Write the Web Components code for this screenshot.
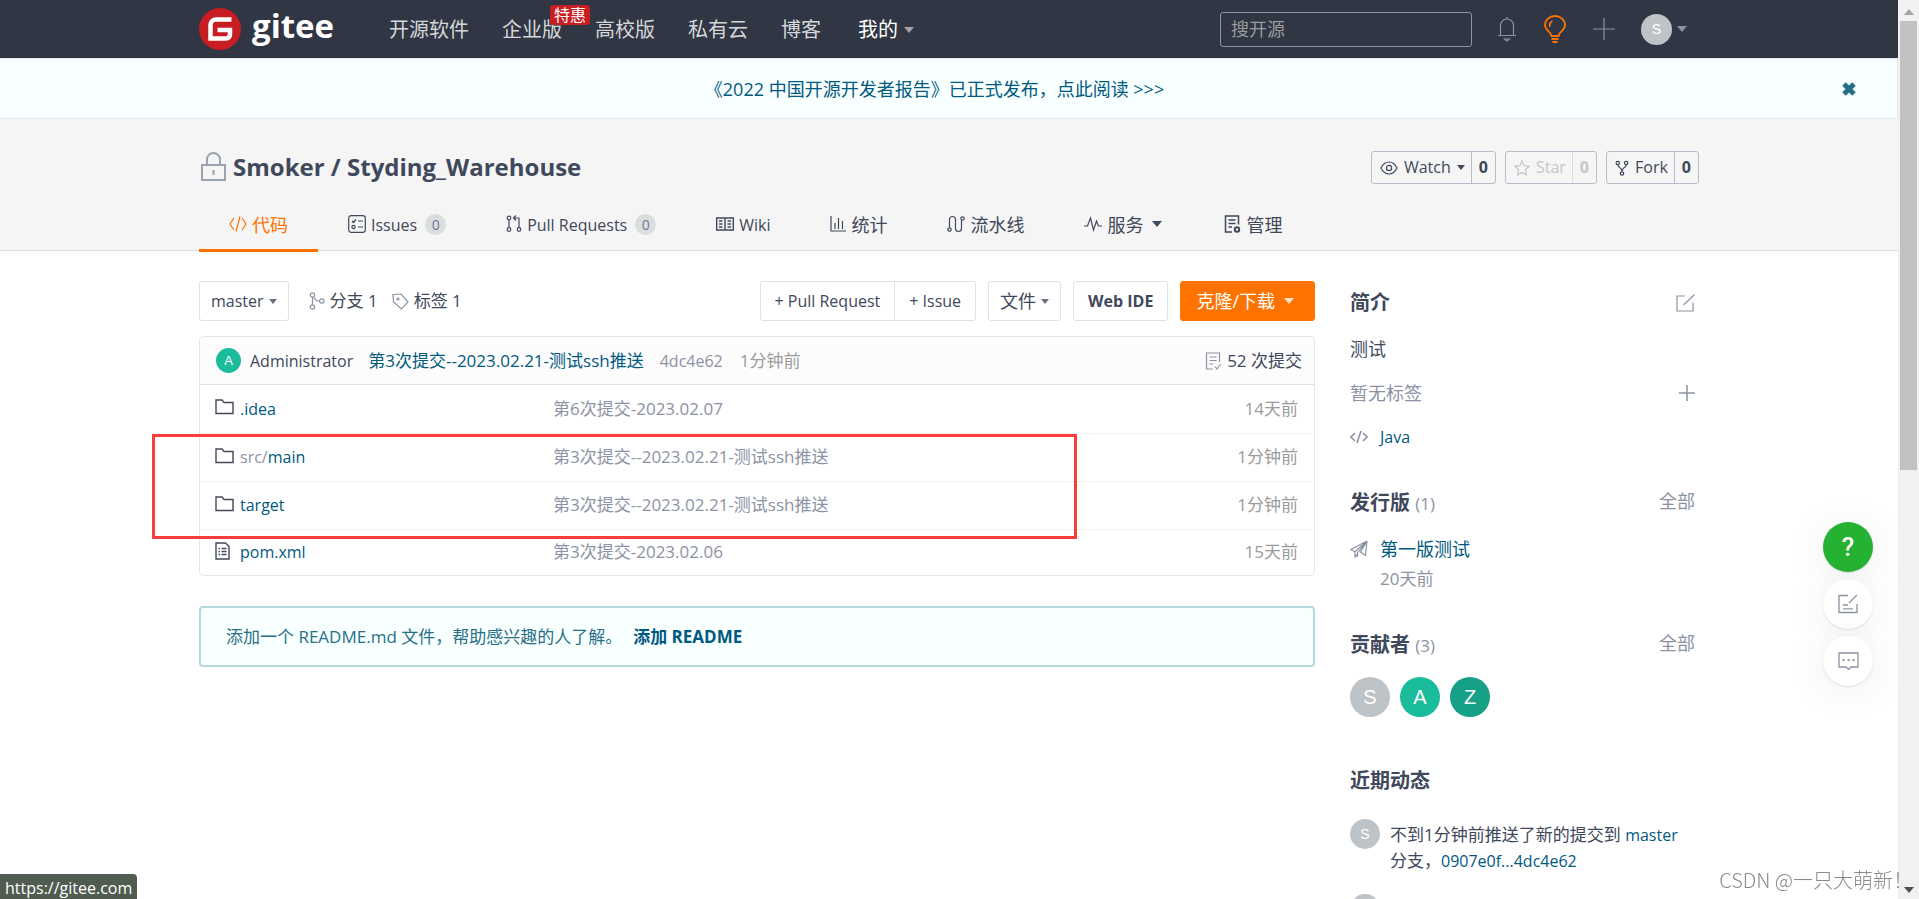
<!DOCTYPE html>
<html lang="zh-CN">
<head>
<meta charset="utf-8">
<title>Smoker / Styding_Warehouse</title>
<style>
  html { overflow: hidden; }
  body {
    margin: 0; padding-right: 21px; height: 100vh; box-sizing: border-box; overflow: hidden; background: #fff; color: #40485b;
    font: 17px/24px "Open Sans", "Noto Sans CJK SC", sans-serif;
    --ink: #40485b; --muted: #8c92a4; --link: #005980; --orange: #fe7300; --line: #dce3e8;
  }
</style>
</head>
<body>
<gt-topbar></gt-topbar>
<gt-notice>《2022 中国开源开发者报告》已正式发布，点此阅读 &gt;&gt;&gt;</gt-notice>
<gt-repo-header></gt-repo-header>
<gt-page>
  <gt-toolbar></gt-toolbar>
  <gt-files></gt-files>
  <gt-readme-hint></gt-readme-hint>
  <gt-sidebar slot="side"></gt-sidebar>
</gt-page>
<gt-float-tools></gt-float-tools>
<gt-scroll-rail></gt-scroll-rail>
<gt-status-link>https://gitee.com</gt-status-link>
<gt-watermark>CSDN @一只大萌新！</gt-watermark>

<script>
const BASE = `
  :host, *, *::before { box-sizing: border-box; }
  a { color: inherit; text-decoration: none; }
  button { font: inherit; color: inherit; background: none; border: 0; padding: 0; margin: 0; cursor: pointer; white-space: nowrap; }
  h1, h2, p { margin: 0; }
  ul { list-style: none; margin: 0; padding: 0; }
`;
function define(name, css, html) {
  const tpl = document.createElement('template');
  customElements.define(name, class extends HTMLElement {
    constructor() {
      super();
      tpl.innerHTML = `<style>${BASE}${css}</style>${typeof html === 'function' ? html(this) : html}`;
      this.attachShadow({ mode: 'open' }).append(tpl.content.cloneNode(true));
    }
  });
}

const ICONS = {
  bell: [20, 26, '<path d="M1 19.500h18M3.500 19V9.500a6.500 6.500 0 0 1 13 0V19M10 3V1M7.500 23h5l-2.500 2z"/>'],
  bulb: [24, 28, '<path stroke-width="1.800" d="M8.500 21c0-4.500-6.500-5-6.500-11a10 9 0 0 1 20 0c0 6-6.500 6.500-6.500 11zM7 12c-1-2 0-5 2.500-6M8.500 24h7M9.500 27h5"/>'],
  plus: [22, 22, '<path d="M11 0v22M0 11h22"/>'],
  cross: [14, 14, '<path stroke-width="5" d="M2 2l10 10M12 2L2 12"/>'],
  lock: [25, 29, '<path stroke-width="2" d="M1 13h23v15H1zM6 13V7.500a6.500 6.500 0 0 1 13 0V13M12.500 18v5"/>'],
  code: [18, 18, '<path d="M5 3L1 9l4 6M13 3l4 6-4 6M11 1.500L7 16.500"/>'],
  codeSmall: [18, 14, '<path stroke-width="1.600" d="M5 3L1 7l4 4M13 3l4 4-4 4M11 1L7 13"/>'],
  issues: [18, 18, '<rect x=".7" y=".7" width="16.600" height="16.600" rx="2.500"/><path d="M4 6l1.500 1.500L8 4.500M10 6h5M10 12h5"/><circle cx="5.500" cy="12" r="1.600"/>'],
  pull: [16, 18, '<circle cx="3" cy="3" r="1.800"/><circle cx="3" cy="14.500" r="1.800"/><circle cx="13" cy="14.500" r="1.800"/><path d="M3 5v7.500M13 12.500V3H7.500M10 .5L7.500 3 10 5.500"/>'],
  book: [18, 14, '<path stroke-width="1.400" d="M.7 1h16.600v12H.7zM9 1v12M3 4h3.500M3 7h3.500M3 10h3.500M11.500 4H15M11.500 7H15M11.500 10H15"/>'],
  chart: [16, 16, '<path d="M1 0v15h15M5 13V7M8.500 13V2M12.500 13V5"/>'],
  flow: [18, 18, '<circle cx="2.500" cy="14.500" r="1.700"/><circle cx="15.500" cy="3.500" r="1.700"/><path d="M2.500 12.500V4.500a3 3 0 0 1 6 0v9a3 3 0 0 0 6 0V5.500"/>'],
  pulse: [18, 16, '<path d="M0 10h3.500L6.500 2l3 12 3-9 2 5H18"/>'],
  manage: [17, 18, '<path stroke-width="1.500" d="M8 17H1.500V1h13v8.500M4.500 5h7M4.500 8.500h7M4.500 12h3.500"/><circle cx="13" cy="14.500" r="2.200" stroke-width="2"/>'],
  eye: [18, 14, '<path d="M1 7c4-8 12-8 16 0-4 8-12 8-16 0z"/><circle cx="9" cy="7" r="2.600"/>'],
  star: [16, 16, '<path d="M8 1l2.100 4.700 5 .6-3.700 3.500 1 5.100L8 12.400 3.600 14.900l1-5.100L.9 6.300l5-.6z"/>'],
  fork: [14, 16, '<circle cx="2.800" cy="3" r="1.700"/><circle cx="11.200" cy="3" r="1.700"/><circle cx="7" cy="13.500" r="1.700"/><path d="M2.800 4.700C2.800 8 7 7 7 11.500M11.200 4.700C11.200 8 7 7 7 11.500"/>'],
  branch: [16, 18, '<circle cx="3.500" cy="3" r="2.200"/><circle cx="3.500" cy="15" r="2.200"/><circle cx="12.800" cy="9" r="2.200"/><path d="M3.500 5.200v7.600M4.800 5C6 8 8 9 10.500 9"/>'],
  tag: [17, 17, '<path d="M1 1.500l8-.5 7 8-6.500 7L1.500 9z"/><circle cx="6" cy="6" r="1"/>'],
  commits: [16, 18, '<path d="M8 17H1.500V1h13v9M4.500 5h7M4.500 8.500h7M4.500 12h3.500M10 14.500l2 2.500 3.500-5"/>'],
  folder: [19, 16, '<path stroke-width="1.400" d="M1 14.500V1h6l2 2.500h9v11z"/>'],
  file: [15, 18, '<path stroke-width="1.400" d="M1 17V1h9.500L14 4.500V17zM3.500 6.500h1.500M6.500 6.500h5M3.500 9.500h1.500M6.500 9.500h5M3.500 12.500h1.500M6.500 12.500h5"/>'],
  edit: [19, 18, '<path d="M9 2H1v15h16V8.500M7.500 11L18.500.5"/>'],
  add: [16, 16, '<path stroke-width="1.500" d="M8 0v16M0 8h16"/>'],
  plane: [18, 18, '<path d="M17 1L.8 9.500l4.200 2.300zM17 1l-1.500 14.500-5-3.500zM5 11.800V17l3-3.500M5 11.800L17 1 7.500 13v4"/>'],
  note: [20, 20, '<path stroke-width="1.300" d="M10 1.500H1v17h18V10M11 9l8-8M5 11h5M5 14.800h10"/>'],
  chat: [21, 18, '<path stroke-width="1.300" d="M1 1h19v14h-7l-2.500 2.500L8 15H1z"/><path stroke-width="2.200" stroke-linecap="round" d="M5.500 8.200h.1M10.500 8.200h.1M15.500 8.200h.1"/>'],
  caret: [10, 6, '<path stroke="none" fill="currentColor" d="M0 0h10L5 6z"/>'],
  caretSmall: [8, 5, '<path stroke="none" fill="currentColor" d="M0 0h8L4 5z"/>'],
};
customElements.define('gt-icon', class extends HTMLElement {
  connectedCallback() {
    if (this.shadowRoot) return;
    const [w, h, body] = ICONS[this.getAttribute('name')];
    this.attachShadow({ mode: 'open' }).innerHTML =
      `<style>:host{display:inline-flex;flex:none}</style>
       <svg aria-hidden="true" width="${w}" height="${h}" viewBox="0 0 ${w} ${h}" fill="none" stroke="currentColor" stroke-width="1.2">${body}</svg>`;
  }
});

define('gt-avatar', `
  :host { display: inline-flex; flex: none; align-items: center; justify-content: center;
    width: var(--size, 30px); height: var(--size, 30px); border-radius: 50%;
    background: var(--tone, #bdc3c7); color: #fff;
    font-family: "Liberation Sans", sans-serif; font-size: var(--letter, 14px); line-height: 1; }
`, '<slot></slot>');

define('gt-topbar', `
  :host { display: block; background: #303643; color: #d6d7da; }
  .in { max-width: 1500px; margin: 0 auto; height: 58px; display: flex; align-items: center; }
  .logo { display: flex; align-items: center; gap: 11px; width: 190px; color: #fff; font-size: 33px; font-weight: 700; line-height: 42px; }
  .logo span { padding-bottom: 6px; }
  nav { display: flex; gap: 33px; font-size: 20px; line-height: 30px; flex: 1; padding-top: 2px; }
  nav a { position: relative; white-space: nowrap; }
  nav .mine { color: #fff; display: flex; align-items: center; gap: 6px; margin-left: 4px; }
  nav .mine gt-icon { color: #a0a3ab; }
  .hot { position: absolute; left: 48px; top: -10px; z-index: 1; padding: 0 4px; border-radius: 3px; background: #c71d23; color: #fff; font-size: 16px; line-height: 20px; }
  input { width: 252px; height: 35px; padding: 0 10px; border: 1px solid #8c92a4; border-radius: 3px; background: transparent; color: #fff; font: inherit; font-size: 18px; }
  input::placeholder { color: #9a9b9f; opacity: 1; }
  .tools { display: flex; align-items: center; gap: 26px; margin-left: 25px; width: 202px; color: #8c92a4; }
  .tools button, .tools a { display: flex; align-items: center; gap: 5px; }
  .bulb { color: var(--orange); }
`, `
  <div class="in">
    <a class="logo" href="#" aria-label="gitee">
      <svg width="42" height="42" viewBox="0 0 42 42" aria-hidden="true"><circle cx="21" cy="21" r="21" fill="#c71d23"/><path d="M32.500 11.500H17a5.500 5.500 0 0 0-5.500 5.500v13.500H27a4 4 0 0 0 4-4v-4.500H18.500" fill="none" stroke="#fff" stroke-width="4.500"/></svg>
      <span>gitee</span>
    </a>
    <nav>
      <a href="#">开源软件</a><a href="#">企业版<span class="hot">特惠</span></a><a href="#">高校版</a><a href="#">私有云</a><a href="#">博客</a>
      <a href="#" class="mine">我的 <gt-icon name="caret"></gt-icon></a>
    </nav>
    <input type="search" placeholder="搜开源" aria-label="搜开源">
    <div class="tools">
      <button aria-label="通知"><gt-icon name="bell"></gt-icon></button>
      <button class="bulb" aria-label="提示"><gt-icon name="bulb"></gt-icon></button>
      <button aria-label="新建"><gt-icon name="plus"></gt-icon></button>
      <a href="#"><gt-avatar style="--size:31px">S</gt-avatar><gt-icon name="caret"></gt-icon></a>
    </div>
  </div>
`);

define('gt-notice', `
  :host { display: flex; align-items: center; height: 61px; padding: 0 41px 0 0; border: 1px solid #e3e9ed; border-left: 0; background: #f8ffff; color: var(--link); }
  a { flex: 1; text-align: center; font-size: 18px; padding-left: 27px; }
  button { display: flex; color: #276f86; }
`, `<a href="#"><slot></slot></a><button aria-label="关闭"><gt-icon name="cross"></gt-icon></button>`);

define('gt-counter-button', `
  :host { display: inline-flex; }
  button { display: flex; align-items: stretch; height: 33px; border: 1px solid #b9bbc9; border-radius: 3px; line-height: 31px; }
  .main { display: flex; align-items: center; gap: 6px; padding: 0 6px 0 8px; }
  .count { border-left: 1px solid #b9bbc9; padding: 0 7px; font-weight: 700; min-width: 24px; }
  button:disabled { color: #c6c6c6; }
  button:disabled .count { border-color: #dcdde3; }
`, el => `<button ${el.hasAttribute('off') ? 'disabled' : ''}><span class="main"><slot></slot></span><span class="count">0</span></button>`);

define('gt-repo-header', `
  :host { display: block; background: #f5f5f5; border-bottom: 1px solid #dcdddf; padding-top: 32px; }
  .in { max-width: 1500px; margin: 0 auto; }
  .title { display: flex; align-items: center; gap: 9px; height: 33px; font-size: 16px; }
  h1 { flex: 1; display: flex; align-items: center; gap: 7px; padding-left: 2px; font-size: 24px; line-height: 32px; margin-bottom: 2px; }
  h1 gt-icon { color: #9aa3ae; }
  nav { display: flex; height: 54px; margin: 14px 0 -2px; }
  nav a { display: flex; align-items: center; gap: 5px; padding: 2px 30px 0; border-bottom: 3px solid transparent; font-size: 18px; white-space: nowrap; }
  nav a.en { font-size: 16px; }
  nav a.on { color: var(--orange); border-color: var(--orange); }
  nav gt-icon { margin-bottom: 2px; }
  .n { min-width: 21px; height: 21px; margin-left: 3px; border-radius: 11px; background: #dcdddf; color: #6e7b9b; font-size: 14px; line-height: 21px; text-align: center; }
  .caret { padding: 0 2px 0 4px; }
`, `
  <div class="in">
    <div class="title">
      <h1><gt-icon name="lock"></gt-icon><a href="#">Smoker / Styding_Warehouse</a></h1>
      <gt-counter-button><gt-icon name="eye"></gt-icon>Watch<gt-icon name="caretSmall"></gt-icon></gt-counter-button>
      <gt-counter-button off><gt-icon name="star"></gt-icon>Star</gt-counter-button>
      <gt-counter-button><gt-icon name="fork"></gt-icon>Fork</gt-counter-button>
    </div>
    <nav>
      <a href="#" class="on"><gt-icon name="code"></gt-icon>代码</a>
      <a href="#" class="en"><gt-icon name="issues"></gt-icon>Issues<span class="n">0</span></a>
      <a href="#" class="en"><gt-icon name="pull"></gt-icon>Pull Requests<span class="n">0</span></a>
      <a href="#" class="en"><gt-icon name="book"></gt-icon>Wiki</a>
      <a href="#"><gt-icon name="chart"></gt-icon>统计</a>
      <a href="#"><gt-icon name="flow"></gt-icon>流水线</a>
      <a href="#"><gt-icon name="pulse"></gt-icon>服务<gt-icon class="caret" name="caret"></gt-icon></a>
      <a href="#"><gt-icon name="manage"></gt-icon>管理</a>
    </nav>
  </div>
`);

define('gt-page', `
  :host { display: grid; grid-template-columns: minmax(0, 1fr) 349px; column-gap: 35px; max-width: 1500px; margin: 0 auto; padding-top: 30px; }
  main { display: flex; flex-direction: column; }
`, `<main><slot></slot></main><slot name="side"></slot>`);

define('gt-toolbar', `
  :host { display: flex; align-items: center; gap: 12px; margin-bottom: 15px; }
  .btn { display: flex; align-items: center; gap: 5px; height: 40px; padding: 0 11px; border: 1px solid var(--line); border-radius: 3px; font-size: 16px; }
  .btn gt-icon { color: #6a7080; }
  .refs { display: flex; gap: 14px; flex: 1; padding-left: 8px; }
  .refs a { display: flex; align-items: center; gap: 5px; }
  .refs gt-icon { color: #8c92a4; }
  .group { display: flex; }
  .group .btn { padding: 0 14px; }
  .group .btn:first-child { border-radius: 3px 0 0 3px; }
  .group .btn:last-child { border-radius: 0 3px 3px 0; margin-left: -1px; }
  .cn { font-size: 18px; }
  .bold { font-weight: 700; padding: 0 14px; }
  .primary { background: var(--orange); border-color: var(--orange); color: #fff; font-size: 18px; gap: 9px; padding: 0 20px 0 15px; }
  .primary gt-icon { color: #ffe0c4; }
`, `
  <button class="btn">master<gt-icon name="caretSmall"></gt-icon></button>
  <div class="refs">
    <a href="#"><gt-icon name="branch"></gt-icon>分支 1</a>
    <a href="#"><gt-icon name="tag"></gt-icon>标签 1</a>
  </div>
  <div class="group"><button class="btn">+ Pull Request</button><button class="btn">+ Issue</button></div>
  <button class="btn cn">文件<gt-icon name="caretSmall"></gt-icon></button>
  <button class="btn bold">Web IDE</button>
  <button class="btn primary">克隆/下载<gt-icon name="caret"></gt-icon></button>
`);

const FILES = [
  ['folder', '', '.idea', '第6次提交-2023.02.07', '14天前'],
  ['folder', 'src/', 'main', '第3次提交--2023.02.21-测试ssh推送', '1分钟前'],
  ['folder', '', 'target', '第3次提交--2023.02.21-测试ssh推送', '1分钟前'],
  ['file', '', 'pom.xml', '第3次提交-2023.02.06', '15天前'],
];
define('gt-files', `
  :host { display: block; position: relative; border: 1px solid #e1e6ea; border-radius: 4px; }
  .last { display: flex; align-items: center; height: 48px; padding: 0 12px 0 16px; background: #fcfcfc; border-bottom: 1px solid var(--line); border-radius: 4px 4px 0 0; }
  .who { font-size: 16px; margin: 0 15px 0 9px; }
  .msg { color: var(--link); margin-right: 16px; }
  .hash { color: var(--muted); font-size: 16px; margin-right: 17px; }
  .when { color: #9b9b9b; flex: 1; }
  .total { display: flex; align-items: center; gap: 6px; }
  .total gt-icon { color: var(--muted); }
  table { width: 100%; border-collapse: collapse; table-layout: fixed; }
  td { height: 48px; padding: 0 16px 0 0; border-bottom: 1px solid #eef1f4; color: var(--muted); }
  tr:last-child td { border-bottom: 0; height: 46px; }
  td:first-child { width: 353px; padding-left: 15px; }
  td:last-child { width: 200px; text-align: right; color: #9b9b9b; }
  .name { display: flex; align-items: center; gap: 6px; font-size: 16px; color: var(--ink); }
  .ico { width: 19px; display: flex; padding-bottom: 3px; }
  .name a { color: var(--link); }
  .name i { font-style: normal; color: var(--muted); }
  .mark { position: absolute; left: -48px; right: 237px; top: 97px; height: 105px; border: 3px solid #fb3d3c; pointer-events: none; }
`, () => `
  <div class="last">
    <gt-avatar style="--size:25px;--tone:#1abc9c;--letter:13px">A</gt-avatar>
    <a class="who" href="#">Administrator</a><a class="msg" href="#">第3次提交--2023.02.21-测试ssh推送</a>
    <a class="hash" href="#">4dc4e62</a><span class="when">1分钟前</span>
    <a class="total" href="#"><gt-icon name="commits"></gt-icon>52 次提交</a>
  </div>
  <table><tbody>${FILES.map(([icon, dir, name, msg, time]) => `
    <tr><td><span class="name"><span class="ico"><gt-icon name="${icon}"></gt-icon></span><a href="#"><i>${dir}</i>${name}</a></span></td>
    <td>${msg}</td><td>${time}</td></tr>`).join('')}</tbody></table>
  <div class="mark"></div>
`);

define('gt-readme-hint', `
  :host { display: flex; align-items: center; gap: 11px; min-height: 61px; margin-top: 30px; padding: 0 25px; border: 2px solid #b3d9df; border-radius: 4px; background: #f8ffff; color: #276f86; }
  a { color: var(--link); font-weight: 700; }
`, `<span>添加一个 README.md 文件，帮助感兴趣的人了解。</span><a href="#">添加 README</a>`);

define('gt-side-section', `
  :host { display: block; margin-bottom: 42px; }
  header { display: flex; align-items: center; justify-content: space-between; height: 24px; margin-bottom: var(--head-gap, 22px); padding-right: 4px; color: var(--muted); font-size: 18px; }
  h2 { color: var(--ink); font-size: 20px; line-height: 24px; }
  small { font-size: 17px; font-weight: 400; color: var(--muted); }
  ::slotted([slot=action]) { padding-bottom: 4px; }
`, el => `<header><h2>${el.getAttribute('label')}${el.hasAttribute('count') ? ` <small>(${el.getAttribute('count')})</small>` : ''}</h2><slot name="action"></slot></header><slot></slot>`);

define('gt-sidebar', `
  :host { display: block; padding-top: 10px; font-size: 18px; }
  .row { display: flex; align-items: center; justify-content: space-between; margin-top: 20px; padding-right: 4px; color: var(--muted); }
  .row.lang, .row.rel { justify-content: flex-start; gap: 12px; font-size: 16px; }
  .row.rel { margin-top: 0; font-size: 18px; }
  .row a { color: var(--link); }
  .age { margin: 6px 0 0 30px; color: var(--muted); font-size: 17px; }
  .people { display: flex; gap: 10px; --size: 40px; --letter: 20px; margin-bottom: 52px; }
  li { display: flex; gap: 10px; height: 75px; font-size: 17px; line-height: 25px; }
  li p { padding-top: 3px; }
  li p a { font-size: 16px; color: var(--link); }
  .act { display: flex; color: var(--muted); }
`, `
  <gt-side-section label="简介">
    <button slot="action" class="act" aria-label="编辑"><gt-icon name="edit"></gt-icon></button>
    <p>测试</p>
    <div class="row">暂无标签<button class="act" aria-label="添加标签"><gt-icon name="add"></gt-icon></button></div>
    <div class="row lang"><gt-icon name="codeSmall"></gt-icon><a href="#">Java</a></div>
  </gt-side-section>
  <gt-side-section label="发行版" count="1">
    <a slot="action" href="#">全部</a>
    <div class="row rel"><gt-icon name="plane"></gt-icon><a href="#">第一版测试</a></div>
    <p class="age">20天前</p>
  </gt-side-section>
  <gt-side-section label="贡献者" count="3" style="--head-gap:20px">
    <a slot="action" href="#">全部</a>
    <div class="people"><gt-avatar>S</gt-avatar><gt-avatar style="--tone:#1abc9c">A</gt-avatar><gt-avatar style="--tone:#16a085">Z</gt-avatar></div>
  </gt-side-section>
  <gt-side-section label="近期动态" style="--head-gap:26px">
    <ul>
      <li><gt-avatar>S</gt-avatar><p>不到1分钟前推送了新的提交到 <a href="#">master</a><br>分支，<a href="#">0907e0f...4dc4e62</a></p></li>
      <li><gt-avatar></gt-avatar></li>
    </ul>
  </gt-side-section>
`);

define('gt-float-tools', `
  :host { position: fixed; right: 46px; top: 522px; display: flex; flex-direction: column; gap: 7px; }
  button { display: flex; align-items: center; justify-content: center; width: 50px; height: 50px; border-radius: 50%; background: #fff; color: #8c92a4; box-shadow: 0 1px 2px #0000001f, 0 4px 40px #00000014; }
  .help { background: #25b131; color: #fff; font: 500 26px/1 Roboto, sans-serif; }
`, `<button class="help" aria-label="帮助">?</button><button aria-label="反馈"><gt-icon name="note"></gt-icon></button><button aria-label="留言"><gt-icon name="chat"></gt-icon></button>`);

define('gt-scroll-rail', `
  :host { position: fixed; inset: 0 0 0 auto; width: 21px; background: #f1f1f1; color: #505050; display: flex; flex-direction: column; align-items: center; padding: 9px 0 6px; }
  .up { color: #a3a3a3; transform: rotate(180deg); }
  .thumb { width: 17px; height: 449px; margin: 6px 0 auto; background: #c1c1c1; }
`, `<gt-icon class="up" name="caret"></gt-icon><div class="thumb"></div><gt-icon name="caret"></gt-icon>`);

define('gt-status-link', `
  :host { position: fixed; left: 0; bottom: 0; height: 25px; padding: 0 5px; border-radius: 0 4px 0 0; background: #515c50; color: #fff; font-size: 16px; line-height: 28px; }
`, '<slot></slot>');

define('gt-watermark', `
  :host { position: fixed; right: 6px; bottom: 4px; color: #8a8a8a; font: 300 20px/30px "Noto Sans CJK SC", sans-serif; text-shadow: -1px -1px 0 #ffffffcc; }
`, '<slot></slot>');
</script>
</body>
</html>
